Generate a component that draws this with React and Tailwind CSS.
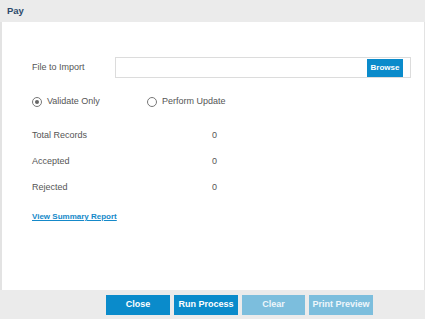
export default function App() {
  const font = { fontFamily: '"Liberation Sans", Arial, sans-serif' };
  return (
    <div className="w-[425px] h-[319px] flex flex-col bg-[#ebebeb] text-[#555] text-[9px]" style={font}>
      <div className="h-[22px] flex items-center px-[7px] text-[9.5px] font-bold text-[#2c4a6b] shrink-0">Pay</div>
      <div className="flex-1 bg-white border-l-2 border-r border-[#e3e3e3] pl-[30px] pt-[35px] relative">
        <div className="flex items-center h-[21px]">
          <div className="w-[83px]">File to Import</div>
          <div className="w-[296px] h-[21px] border border-[#dcdcdc] flex justify-end items-center pr-[7px]">
            <div className="h-[18px] w-[36px] bg-[#0a8bcb] text-white text-[8px] font-bold flex items-center justify-center">Browse</div>
          </div>
        </div>
        <div className="flex items-center mt-[14px] h-[20px]">
          <div className="flex items-center w-[115px]">
            <span className="w-[10px] h-[10px] rounded-full border border-[#777] flex items-center justify-center mr-[5px]">
              <span className="w-[4px] h-[4px] rounded-full bg-[#666]" />
            </span>
            <span>Validate Only</span>
          </div>
          <div className="flex items-center">
            <span className="w-[10px] h-[10px] rounded-full border border-[#777] mr-[5px]" />
            <span>Perform Update</span>
          </div>
        </div>
        <div className="mt-[16px] flex flex-col gap-[11px]">
          {[['Total Records','0'],['Accepted','0'],['Rejected','0']].map(([l,v]) => (
            <div key={l} className="flex items-center h-[15px]">
              <div className="w-[180px]">{l}</div>
              <div>{v}</div>
            </div>
          ))}
        </div>
        <div className="mt-[16px] text-[8px] font-bold text-[#1589c9] underline">View Summary Report</div>
      </div>
      <div className="h-[29px] shrink-0 flex items-center pl-[106px] gap-[4px]">
        <div className="w-[64px] h-[20px] bg-[#0a8bcb] text-white font-bold flex items-center justify-center">Close</div>
        <div className="w-[64px] h-[20px] bg-[#0a8bcb] text-white font-bold flex items-center justify-center">Run Process</div>
        <div className="w-[63px] h-[20px] bg-[#7cbedd] text-[#eef6fb] font-bold flex items-center justify-center">Clear</div>
        <div className="w-[64px] h-[20px] bg-[#7cbedd] text-[#eef6fb] font-bold flex items-center justify-center">Print Preview</div>
      </div>
    </div>
  );
}
